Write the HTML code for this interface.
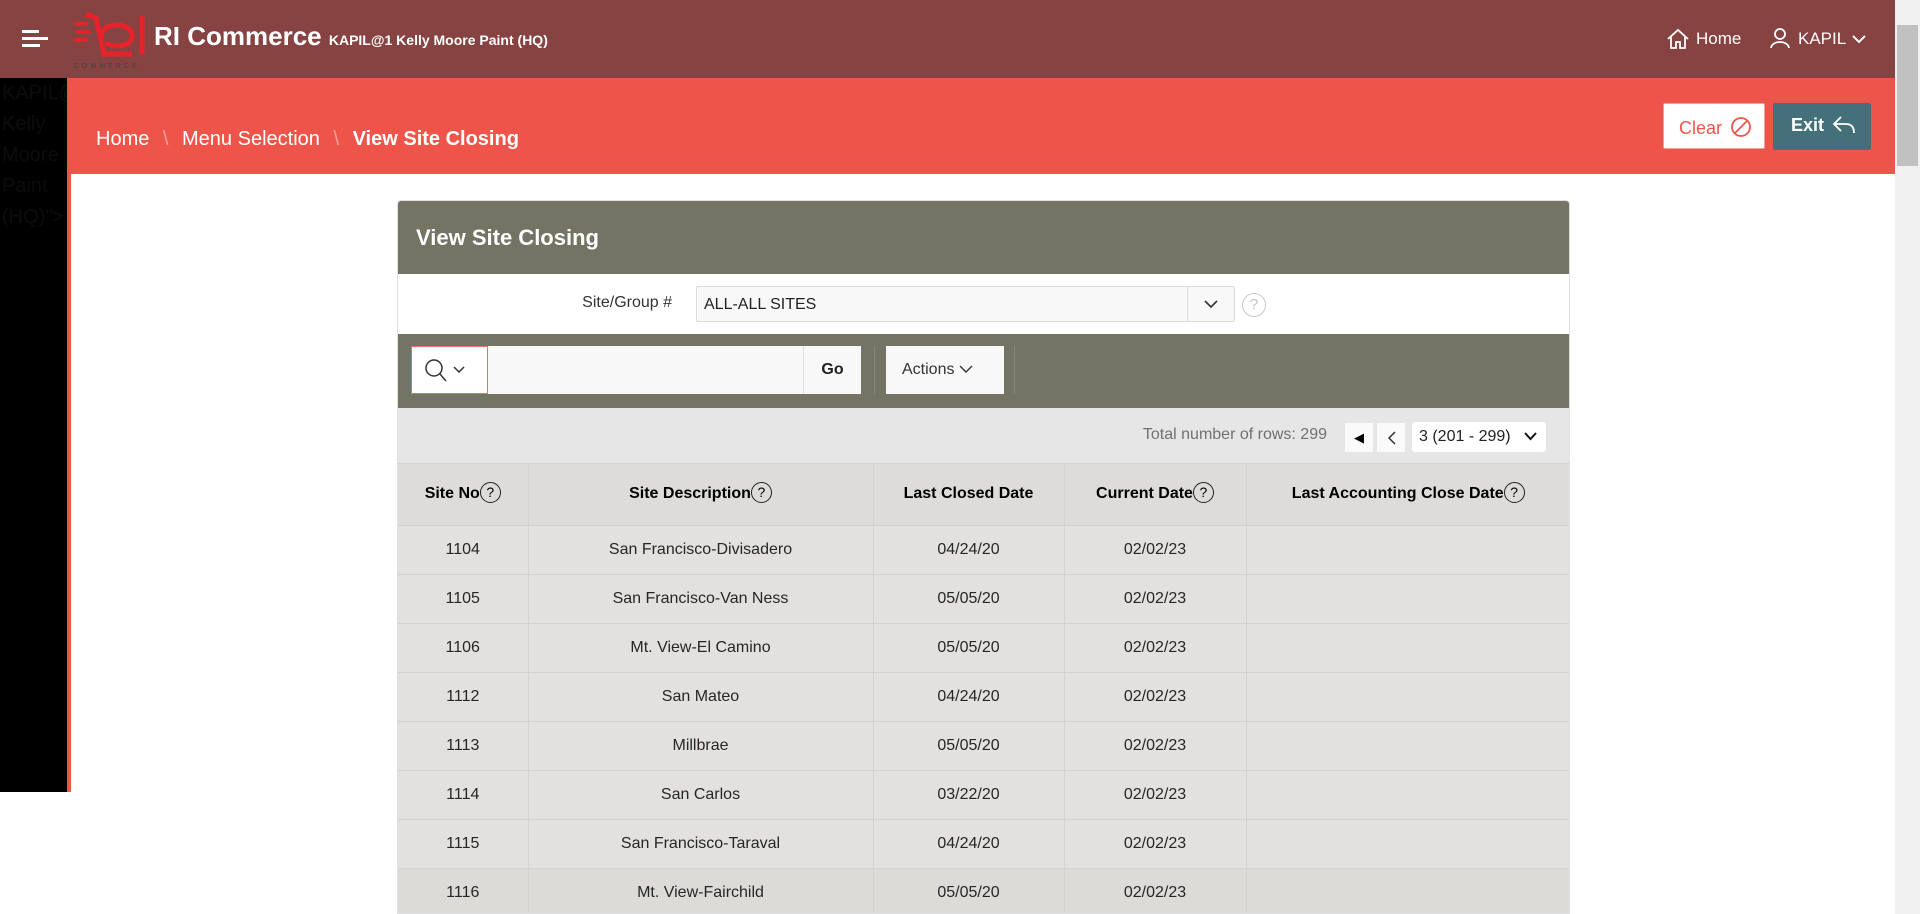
<!DOCTYPE html>
<html><head><meta charset="utf-8"><style>
*{box-sizing:border-box;margin:0;padding:0}
body{width:1920px;height:914px;overflow:hidden;background:#fff;font-family:"Liberation Sans","DejaVu Sans",sans-serif;position:relative}
.hdr{position:absolute;left:0;top:0;width:1895px;height:78px;background:#874242;color:#fff}
.side{position:absolute;left:0;top:78px;width:71px;height:714px;background:#000;border-right:4px solid #ef544b;color:#0c0c0c;font-size:20px;line-height:31px;padding-left:2px;overflow:hidden}
.ban{position:absolute;left:71px;top:78px;width:1824px;height:96px;background:#ef544b}
.sb{position:absolute;left:1895px;top:0;width:25px;height:914px;background:#f1f1f1}
.sb .t{position:absolute;left:2px;top:25px;width:21px;height:141px;background:#c1c1c1}
.card{position:absolute;left:397px;top:200px;width:1173px;height:714px;background:#fff;border:1px solid #e0e0e0;border-radius:4px 4px 0 0;overflow:hidden}
.ttl{height:73px;background:#737464;color:#fff;font-weight:bold;font-size:22px;padding:24px 0 0 18px}
.btn{position:absolute;border-radius:2px}
table{border-collapse:collapse;width:1173px;table-layout:fixed}
td,th{text-align:center;font-size:16px;color:#262626;border-right:1px solid #d2d2d0;border-bottom:1px solid #d2d2d0}
th{height:61px;background:#dddcda;font-weight:bold;color:#000}
td{height:49px;background:#e2e1df}
tr.last td{background:#dcdbd8}
.q{display:inline-block;width:21px;height:21px;border:1.5px solid #222;border-radius:50%;font-size:14px;line-height:18px;font-weight:normal;vertical-align:middle;margin-top:-3px;text-align:center}
</style></head><body>
<div class="hdr">
 <div style="position:absolute;left:22px;top:30px;width:17px;height:3px;background:#fff"></div>
 <div style="position:absolute;left:22px;top:37px;width:26px;height:3px;background:#fff"></div>
 <div style="position:absolute;left:22px;top:44px;width:18px;height:3px;background:#fff"></div>
 <svg style="position:absolute;left:72px;top:10px" width="76" height="60" viewBox="0 0 76 60"><g fill="none" stroke="#e8222a" stroke-width="5"><path d="M14 4 L24 8 L32 44 L60 44"/><path d="M30 28 C26 12 60 10 60 26 C60 38 38 38 34 32"/><path d="M70 6 V44"/></g><path d="M2 14h14M4 22h14M2 30h14" stroke="#e8222a" stroke-width="3.5"/><text x="2" y="58" font-size="7" fill="#444" letter-spacing="3" font-family="Liberation Sans">COMMERCE</text></svg>
 <div style="position:absolute;left:154px;top:21px;font-size:26px;font-weight:bold;white-space:nowrap">RI Commerce <span style="font-size:14px;font-weight:bold">KAPIL@1 Kelly Moore Paint (HQ)</span></div>
 <svg style="position:absolute;left:1666px;top:28px" width="24" height="22" viewBox="0 0 24 22" fill="none" stroke="#fff" stroke-width="1.8"><path d="M2 11 L12 2 L22 11 M5 9 V20 H10 V14 H14 V20 H19 V9"/></svg>
 <div style="position:absolute;left:1696px;top:29px;font-size:17px">Home</div>
 <svg style="position:absolute;left:1770px;top:27px" width="20" height="22" viewBox="0 0 20 22" fill="none" stroke="#fff" stroke-width="1.8"><circle cx="10" cy="7" r="5"/><path d="M1 21 C2 13 18 13 19 21"/></svg>
 <div style="position:absolute;left:1798px;top:29px;font-size:17px">KAPIL</div>
 <svg style="position:absolute;left:1852px;top:34px" width="14" height="10" viewBox="0 0 14 10" fill="none" stroke="#fff" stroke-width="2"><path d="M1 2 L7 8 L13 2"/></svg>
</div>
<div class="side">KAPIL@<br>Kelly<br>Moore<br>Paint<br>(HQ)"&gt;</div>
<div class="ban">
 <div style="position:absolute;left:25px;top:50px;font-size:20px;color:#fff">Home <span style="color:#f7a09a;margin:0 8px">\</span> Menu Selection <span style="color:#f7a09a;margin:0 8px">\</span> <b>View Site Closing</b></div>
 <div class="btn" style="left:1592px;top:25px;width:102px;height:46px;background:#fff;border:1px solid #f3a09a;color:#ef544b;font-size:18px;padding:12px 0 0 15px">Clear <svg style="vertical-align:-4px;margin-left:3px" width="22" height="22" viewBox="0 0 22 22" fill="none" stroke="#ef544b" stroke-width="1.8"><circle cx="11" cy="11" r="9"/><path d="M4.5 17.5 L17.5 4.5"/></svg></div>
 <div class="btn" style="left:1702px;top:25px;width:98px;height:47px;background:#44707a;color:#fff;font-size:18px;font-weight:bold;padding:12px 0 0 18px">Exit <svg style="vertical-align:-4px;margin-left:3px" width="24" height="20" viewBox="0 0 24 20" fill="none" stroke="#fff" stroke-width="1.8"><path d="M9 2 L2 9 L9 16 M2 9 H14 C20 9 22 13 22 18"/></svg></div>
</div>
<div class="sb"><div class="t"></div></div>
<div class="card">
 <div class="ttl">View Site Closing</div>
 <div style="position:relative;height:60px">
  <div style="position:absolute;right:897px;top:20px;font-size:16px;color:#333">Site/Group #</div>
  <div style="position:absolute;left:298px;top:12px;width:539px;height:36px;background:#f8f8f8;border:1px solid #dcdcdc;border-radius:2px;font-size:16px;color:#222;padding:9px 0 0 7px">ALL-ALL SITES
   <div style="position:absolute;right:0;top:0;width:47px;height:34px;border-left:1px solid #dcdcdc"><svg style="position:absolute;left:16px;top:13px" width="14" height="9" viewBox="0 0 14 9" fill="none" stroke="#333" stroke-width="1.6"><path d="M1 1 L7 7 L13 1"/></svg></div>
  </div>
  <div style="position:absolute;left:844px;top:19px;width:24px;height:24px;border:1.5px solid #c8c8c8;border-radius:50%;color:#c0c0c0;font-size:15px;text-align:center;line-height:21px">?</div>
 </div>
 <div style="position:relative;height:74px;background:#737464">
  <div style="position:absolute;left:13px;top:12px;width:77px;height:48px;background:#fff;border:1px solid #ef6d66"><svg style="position:absolute;left:12px;top:11px" width="44" height="26" viewBox="0 0 44 26" fill="none" stroke="#333" stroke-width="1.5"><circle cx="10" cy="10" r="8"/><path d="M16 16 L22 23"/><path d="M30 9 L35 14 L40 9"/></svg></div>
  <div style="position:absolute;left:90px;top:12px;width:315px;height:48px;background:#f8f8f8"></div>
  <div style="position:absolute;left:405px;top:12px;width:58px;height:48px;background:#f8f8f8;border-left:1px solid #ddd;font-weight:bold;font-size:16px;text-align:center;line-height:48px;color:#222">Go</div>
  <div style="position:absolute;left:476px;top:12px;width:1px;height:48px;background:#858676"></div>
  <div style="position:absolute;left:488px;top:12px;width:118px;height:48px;background:#f8f8f8;font-size:16px;line-height:48px;padding-left:16px;color:#333">Actions <svg width="14" height="9" viewBox="0 0 14 9" fill="none" stroke="#333" stroke-width="1.4"><path d="M1 1 L7 7 L13 1"/></svg></div>
  <div style="position:absolute;left:616px;top:12px;width:1px;height:48px;background:#858676"></div>
 </div>
 <div style="position:relative;height:56px;background:#e6e6e6;border-bottom:1px solid #d2d2d0">
  <div style="position:absolute;right:242px;top:18px;font-size:16px;color:#707070">Total number of rows: 299</div>
  <div style="position:absolute;left:947px;top:15px;width:28px;height:29px;background:#fafafa;font-size:13px;text-align:center;line-height:29px">◀</div>
  <div style="position:absolute;left:979px;top:15px;width:28px;height:29px;background:#fafafa;text-align:center"><svg style="margin-top:8px" width="9" height="14" viewBox="0 0 9 14" fill="none" stroke="#333" stroke-width="1.5"><path d="M8 1 L2 7 L8 13"/></svg></div>
  <div style="position:absolute;left:1014px;top:14px;width:134px;height:30px;background:#fff;border-radius:3px;font-size:16px;padding:6px 0 0 7px;color:#222">3 (201 - 299)<svg style="position:absolute;right:9px;top:10px" width="13" height="9" viewBox="0 0 13 9" fill="none" stroke="#111" stroke-width="2"><path d="M1 1 L6.5 7 L12 1"/></svg></div>
 </div>
 <table>
  <colgroup><col style="width:130px"><col style="width:345px"><col style="width:191px"><col style="width:182px"><col></colgroup>
  <tr><th>Site No<span class="q">?</span></th><th>Site Description<span class="q">?</span></th><th>Last Closed Date</th><th>Current Date<span class="q">?</span></th><th>Last Accounting Close Date<span class="q">?</span></th></tr>
  <tr><td>1104</td><td>San Francisco-Divisadero</td><td>04/24/20</td><td>02/02/23</td><td></td></tr>
  <tr><td>1105</td><td>San Francisco-Van Ness</td><td>05/05/20</td><td>02/02/23</td><td></td></tr>
  <tr><td>1106</td><td>Mt. View-El Camino</td><td>05/05/20</td><td>02/02/23</td><td></td></tr>
  <tr><td>1112</td><td>San Mateo</td><td>04/24/20</td><td>02/02/23</td><td></td></tr>
  <tr><td>1113</td><td>Millbrae</td><td>05/05/20</td><td>02/02/23</td><td></td></tr>
  <tr><td>1114</td><td>San Carlos</td><td>03/22/20</td><td>02/02/23</td><td></td></tr>
  <tr><td>1115</td><td>San Francisco-Taraval</td><td>04/24/20</td><td>02/02/23</td><td></td></tr>
  <tr class="last"><td>1116</td><td>Mt. View-Fairchild</td><td>05/05/20</td><td>02/02/23</td><td></td></tr>
 </table>
</div>
</body></html>
